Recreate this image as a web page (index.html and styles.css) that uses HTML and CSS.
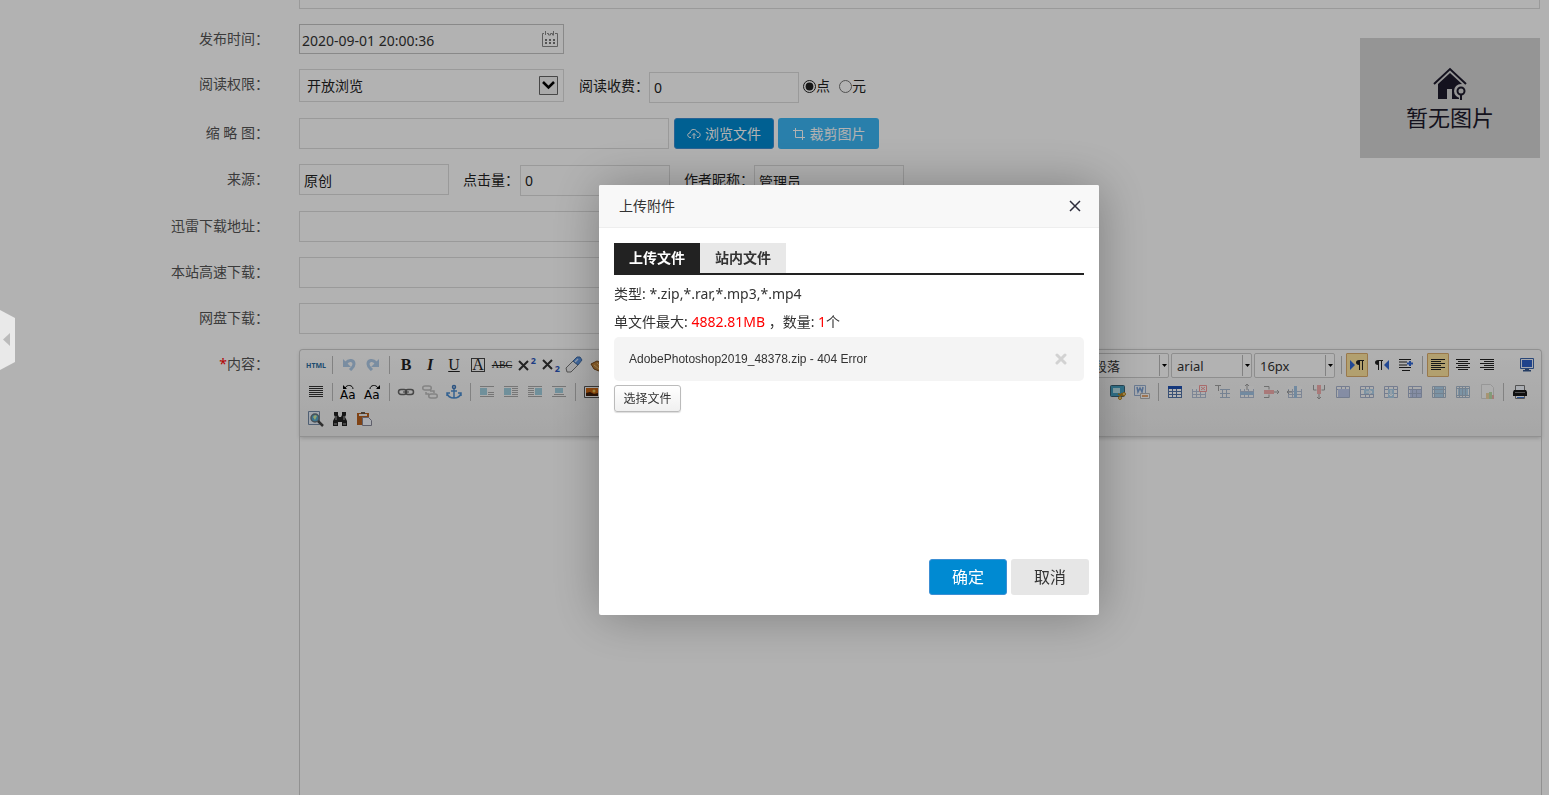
FILE: index.html
```html
<!DOCTYPE html>
<html lang="zh-CN">
<head>
<meta charset="utf-8">
<title>上传附件</title>
<link rel="stylesheet" href="styles.css">
</head>
<body>
<svg class="defs" aria-hidden="true">
  <symbol id="grid" viewBox="0 0 16 16"><path fill="#fff" d="M1 2h14v12H1z"/><path d="M1.500 5v9M5.500 5v9M9.500 5v9M14.500 5v9M1 7.500h14M1 10.500h14M1 13.500h14" fill="none" stroke="#5474a8"/></symbol>
  <symbol id="lines" viewBox="0 0 16 16"><path d="M1 2.500h14M1 4.500h14M1 6.500h14M1 8.500h14M1 10.500h14M1 12.500h14" fill="none" stroke="#333"/></symbol>
  <symbol id="undo" viewBox="0 0 16 16"><path d="M5 6c3-4 8-3 8 1 0 3-2 4-4 6" fill="none" stroke="#8fb6df" stroke-width="3"/><path fill="#8fb6df" d="M2 2v8h8z"/></symbol>
</svg>
<main class="page">
  <textarea class="summary" aria-label="简介"></textarea>
  <div class="top">
    <div class="rows">
      <div class="row">
        <label class="label" for="time">发布时间：</label>
        <div class="date">
          <input id="time" value="2020-09-01 20:00:36">
          <svg class="calendar" viewBox="0 0 18 18"><path d="M3 3.500H1.500v13h15v-13H14M6 3.500h1.500V5H9.500V3.500h2V5H13M4.500 1v4M12.500 1v4" fill="none" stroke="#888"/><path d="M4 9h2v2H4zM8 9h2v2H8zM12 9h2v2h-2zM4 12h2v2H4zM8 12h2v2H8zM12 12h2v2h-2z" fill="#777"/></svg>
        </div>
      </div>
      <div class="row row-tall">
        <label class="label" for="access">阅读权限：</label>
        <div class="access">
          <select id="access"><option>开放浏览</option></select>
          <svg class="drop" viewBox="0 0 19 19"><path d="M.5.500h18v18H.5z" fill="#f2f2f2" stroke="#666"/><path d="M4 6l5.500 5.500L15 6" fill="none" stroke="#000" stroke-width="2.500"/></svg>
        </div>
        <label class="side side-mid" for="fee">阅读收费：</label>
        <input class="field short low" id="fee" value="0">
        <label class="radio"><input type="radio" name="unit" checked>点</label>
        <label class="radio"><input type="radio" name="unit">元</label>
      </div>
      <div class="row">
        <label class="label" for="thumb">缩 略 图：</label>
        <input class="field" id="thumb">
        <button class="btn blue"><svg viewBox="0 0 14 14"><path d="M4 10.500H3C0 10 0 6 3 6c0-4 6-5 7-1 4 0 4 5 1 5.500h-1M7 12V6.500M5 8.500l2-2 2 2" fill="none" stroke="currentColor"/></svg>浏览文件</button>
        <button class="btn sky"><svg viewBox="0 0 14 14"><path d="M3.500 1v9.500H13M1 3.500h9.500V13" fill="none" stroke="currentColor"/></svg>裁剪图片</button>
      </div>
      <div class="row">
        <label class="label" for="source">来源：</label>
        <input class="field short" id="source" value="原创">
        <label class="side" for="hits">点击量：</label>
        <input class="field short dip" id="hits" value="0">
        <label class="side" for="author">作者昵称：</label>
        <input class="field short dip" id="author" value="管理员">
      </div>
    </div>
    <div class="picture">
      <svg viewBox="0 0 34 34"><path d="M1 17L17 2l16 15" fill="none" stroke="#1d1a2c" stroke-width="2"/><path d="M5 17L17 6l12 11v15H19V22h-5v10H5z" fill="#1d1a2c"/><circle cx="28" cy="24" r="7" fill="#d6d6d6"/><path d="M26 24h4v9h-4z" fill="#d6d6d6"/><circle cx="28" cy="24" r="3.500" fill="none" stroke="#1d1a2c" stroke-width="2"/><path d="M28 27v6" stroke="#1d1a2c" stroke-width="2"/></svg>
      <span>暂无图片</span>
    </div>
  </div>
  <div class="row"><label class="label" for="d1">迅雷下载地址：</label><input class="field long" id="d1"></div>
  <div class="row"><label class="label" for="d2">本站高速下载：</label><input class="field long" id="d2"></div>
  <div class="row"><label class="label" for="d3">网盘下载：</label><input class="field long" id="d3"></div>
  <div class="row editor-row">
    <span class="label"><b class="star">*</b>内容：</span>
    <div class="editor">
      <div class="toolbar">
        <div class="tools">
          <div class="group">
            <button class="tool html">HTML</button><i class="sep"></i>
            <button class="tool pale" title="撤销"><svg><use href="#undo"/></svg></button>
            <button class="tool pale flip" title="重做"><svg><use href="#undo"/></svg></button><i class="sep"></i>
            <button class="tool serif bold">B</button>
            <button class="tool serif italic">I</button>
            <button class="tool serif under">U</button>
            <button class="tool serif"><span class="boxed">A</span></button>
            <button class="tool serif strike">ABC</button>
            <button class="tool script"><svg viewBox="0 0 16 16"><path d="M1 4l9 9M10 4l-9 9" stroke="#333" stroke-width="2"/></svg><sup>2</sup></button>
            <button class="tool script"><svg viewBox="0 0 16 16"><path d="M1 3l9 9M10 3l-9 9" stroke="#333" stroke-width="2"/></svg><sub>2</sub></button>
            <button class="tool" title="清除格式"><svg viewBox="0 0 16 16"><path d="M0 11l7-7 5 4-7 7H1z" fill="#f2f2f4" stroke="#777"/><path d="M7 4l4-4h3l2 3-4 5z" fill="#5b93e0" stroke="#4470a8"/><path d="M9 5l3-3" stroke="#cfe2fb" stroke-width="1.500"/></svg></button>
            <button class="tool" title="格式刷"><svg viewBox="0 0 16 16"><path d="M1 7l6-3 7 3-5 7-5-2z" fill="#cc8a3c" stroke="#7b4a18"/><path d="M4 8l5 4M7 6l4 4" stroke="#f0c37c"/></svg></button>
          </div>
          <div class="group">
            <div class="combo"><select aria-label="段落"><option>段落</option></select><svg viewBox="0 0 10 25"><path d="M.5 2v21" stroke="#bbb"/><path d="M3 11h5l-2.500 3z"/></svg></div>
            <div class="combo"><select aria-label="字体"><option>arial</option></select><svg viewBox="0 0 10 25"><path d="M.5 2v21" stroke="#bbb"/><path d="M3 11h5l-2.500 3z"/></svg></div>
            <div class="combo"><select aria-label="字号"><option>16px</option></select><svg viewBox="0 0 10 25"><path d="M.5 2v21" stroke="#bbb"/><path d="M3 11h5l-2.500 3z"/></svg></div>
            <i class="sep"></i>
            <button class="tool on" title="从左向右"><svg viewBox="0 0 16 16"><path d="M1 3v10l5-5z" fill="#3168d4"/><path d="M10 8C6 8 6 3 10 3h5v1h-1v9h-1V4h-2v9h-1z" fill="#222"/></svg></button>
            <button class="tool" title="从右向左"><svg viewBox="0 0 16 16"><path d="M15 3v10l-5-5z" fill="#3168d4"/><path d="M4 8C0 8 0 3 4 3h5v1H8v9H7V4H5v9H4z" fill="#222"/></svg></button>
            <button class="tool" title="首行缩进"><svg viewBox="0 0 16 16"><path d="M1 2.500h12M1 5h8M1 8h8M1 10.500h12M4 13.500h8" fill="none" stroke="#222"/><path d="M9 6.500h6M12 4v5" stroke="#3168d4" stroke-width="2"/></svg></button>
            <i class="sep"></i>
            <button class="tool on" title="居左"><svg viewBox="0 0 16 16"><path d="M1 2.500h14M1 4.500h10M1 6.500h14M1 8.500h10M1 10.500h14M1 12.500h10" stroke="#222"/></svg></button>
            <button class="tool" title="居中"><svg viewBox="0 0 16 16"><path d="M1 2.500h14M3 4.500h10M1 6.500h14M3 8.500h10M1 10.500h14M3 12.500h10" stroke="#222"/></svg></button>
            <button class="tool" title="居右"><svg viewBox="0 0 16 16"><path d="M1 2.500h14M5 4.500h10M1 6.500h14M5 8.500h10M1 10.500h14M5 12.500h10" stroke="#222"/></svg></button>
            <button class="tool full" title="全屏"><svg viewBox="0 0 16 16"><path d="M1.500 1.500h13v10h-13z" fill="#eef3fc" stroke="#3d66ad"/><path d="M3 3h10v7H3z" fill="#2e60c8"/><path d="M6 12h4v1h2v1.500H4V13h2z" fill="#35588f"/></svg></button>
          </div>
        </div>
        <div class="tools">
          <div class="group">
            <button class="tool" title="两端对齐"><svg><use href="#lines"/></svg></button><i class="sep"></i>
            <button class="tool" title="字母大写"><svg viewBox="0 0 16 16"><text x="-1" y="15" class="case">Aa</text><path d="M4 4c2-4 8-3 8 1" fill="none" stroke="#111"/><path d="M2 1v4h4z"/></svg></button>
            <button class="tool" title="字母小写"><svg viewBox="0 0 16 16"><text x="-1" y="15" class="case">Aa</text><path d="M5 5c0-4 6-5 8-1" fill="none" stroke="#111"/><path d="M15 1v4h-4z"/></svg></button><i class="sep"></i>
            <button class="tool" title="超链接"><svg viewBox="0 0 16 16"><rect x=".500" y="5.500" width="8" height="5" rx="2.500" fill="none" stroke="#666" stroke-width="1.500"/><rect x="7.500" y="5.500" width="8" height="5" rx="2.500" fill="none" stroke="#666" stroke-width="1.500"/><path d="M5 8h6" stroke="#555"/></svg></button>
            <button class="tool dim" title="取消链接"><svg viewBox="0 0 16 16"><path d="M7 6H3C0 6 0 2 3 2h4c3 0 3 4 0 4M9 14h4c3 0 3-4 0-4H9c-3 0-3 4 0 4M4 8v2h3M8 7h4v2" fill="none" stroke="#666" stroke-width="1.500"/></svg></button>
            <button class="tool" title="锚点"><svg viewBox="0 0 16 16"><circle cx="8" cy="3" r="1.500" fill="none" stroke="#3f78b8" stroke-width="1.500"/><path d="M8 5v9M5 7h6M1 9c1 4 4 5 7 5s6-1 7-5M1 12V9h3M12 9h3v3" fill="none" stroke="#4d8ed1" stroke-width="1.500"/></svg></button><i class="sep"></i>
            <button class="tool half" title="默认"><svg viewBox="0 0 16 16"><path d="M1 2.500h14M9 8.500h6M9 10.500h6M1 12.500h14" stroke="#777"/><path d="M1 4h7v7H1z" fill="#69b6d0"/></svg></button>
            <button class="tool half" title="左浮动"><svg viewBox="0 0 16 16"><path d="M1 2.500h14M9 4.500h6M9 6.500h6M9 8.500h6M9 10.500h6M1 12.500h14" stroke="#777"/><path d="M1 4h7v7H1z" fill="#69b6d0"/></svg></button>
            <button class="tool half" title="右浮动"><svg viewBox="0 0 16 16"><path d="M1 2.500h14M1 4.500h6M1 6.500h6M1 8.500h6M1 10.500h6M1 12.500h14" stroke="#777"/><path d="M8 4h7v7H8z" fill="#69b6d0"/></svg></button>
            <button class="tool half" title="居中图片"><svg viewBox="0 0 16 16"><path d="M1 2.500h14M3 10.500h10M1 12.500h14" stroke="#777"/><path d="M4 4h8v5H4z" fill="#69b6d0"/></svg></button><i class="sep"></i>
            <button class="tool" title="图片"><svg viewBox="0 0 16 16"><path d="M.5 2.500h15v11H.5z" fill="#fff" stroke="#555"/><path d="M2 4h12v8H2z" fill="#d46a12"/><path d="M2 9l4-1 4 2 4-1v3H2z" fill="#42200d"/><circle cx="10" cy="7" r="1.500" fill="#ffd35c"/></svg></button>
          </div>
          <div class="group second">
            <button class="tool" title="截图"><svg viewBox="0 0 16 16"><rect x=".500" y="1.500" width="14" height="11" rx="1" fill="#45a2c4" stroke="#3b6378"/><path d="M3 4h7v5H3z" fill="#bde6ef"/><path d="M8 10l6 2M12 9l-2 4" stroke="#ba851f" stroke-width="1.500"/><circle cx="14" cy="10" r="1.500" fill="#ffe08a" stroke="#ba851f"/><circle cx="10" cy="14" r="1.500" fill="#ffe08a" stroke="#ba851f"/></svg></button>
            <button class="tool half" title="图片转存"><svg viewBox="0 0 16 16"><path d="M.5 1.500h11v10H.5z" fill="#edf4ff" stroke="#5a81b8"/><path d="M3 3l1 5 2-4 2 4 1-5" fill="none" stroke="#2867bb" stroke-width="1.500"/><path d="M6.500 9.500h9v5h-9z" fill="#fff" stroke="#888"/><path d="M8 11h6v2H8z" fill="#da7420"/></svg></button><i class="sep"></i>
            <button class="tool" title="插入表格"><svg viewBox="0 0 16 16"><use href="#grid"/><path d="M1 2h14v3H1z" fill="#1f51b2"/></svg></button>
            <button class="tool dim" title="删除表格"><svg viewBox="0 0 16 16"><use href="#grid"/><path d="M8.500 1.500h7v6h-7z" fill="#fff" stroke="#e11"/><path d="M10 3l4 3M14 3l-4 3" stroke="#e11"/></svg></button>
            <button class="tool dim" title="表前插行"><svg viewBox="0 0 16 16"><path d="M0 1.500h6M3.500 1v6" stroke="#222"/><path d="M5 5.500h10M5 9.500h10M5 13.500h10M7.500 5v9M11.500 5v9" fill="none" stroke="#36639b"/></svg></button>
            <button class="tool dim" title="插入行"><svg viewBox="0 0 16 16"><use href="#grid"/><path d="M1 8h14v3H1z" fill="#2b7fd0"/><path d="M8 6V0M6 2l2-2 2 2" fill="none" stroke="#222"/></svg></button>
            <button class="tool dim" title="删除行"><svg viewBox="0 0 16 16"><path d="M1 2.500h5v3M1 13.500h5v-3M11 8h5M14 6l2 2-2 2" fill="none" stroke="#222"/><path d="M1 6h10v4H1z" fill="#e44"/></svg></button>
            <button class="tool dim" title="插入列"><svg viewBox="0 0 16 16"><use href="#grid"/><path d="M7 2h3v12H7z" fill="#2b7fd0"/><path d="M5 8H0M2 6L0 8l2 2" fill="none" stroke="#222"/></svg></button>
            <button class="tool dim" title="删除列"><svg viewBox="0 0 16 16"><path d="M2.500 1v5h3M13.500 1v5h-3M8 10v5M6 13l2 2 2-2" fill="none" stroke="#222"/><path d="M6 1h4v9H6z" fill="#e44"/></svg></button>
            <button class="tool dim" title="合并单元格"><svg viewBox="0 0 16 16"><path d="M1.500 2.500h13v11h-13zM1 5.500h14M6.500 2v3M10.500 2v3" fill="#fff" stroke="#345292"/><path d="M3 5h11v8H3z" fill="#6e8ddd"/></svg></button>
            <button class="tool dim" title="右合并"><svg viewBox="0 0 16 16"><path d="M1.500 2.500h13v11h-13zM1 5.500h14M1 10.500h14M6.500 2v11M10.500 2v11" fill="#fff" stroke="#345292"/><path d="M5 5h10v5H5z" fill="#4aa0dc"/><path d="M7 8h6M10 6l3 2-3 2" stroke="#fff" fill="none"/></svg></button>
            <button class="tool dim" title="下合并"><svg viewBox="0 0 16 16"><path d="M1.500 2.500h13v11h-13zM1 5.500h14M1 9.500h14M5.500 2v11M10.500 2v11" fill="#fff" stroke="#345292"/><path d="M5 5h6v9H5z" fill="#4aa0dc"/><path d="M8 6v6M6 10l2 2 2-2" stroke="#fff" fill="none"/></svg></button>
            <button class="tool dim" title="拆分单元格"><svg viewBox="0 0 16 16"><path d="M3 5h11v8H3z" fill="#6e8ddd"/><path d="M1.500 2.500h13v11h-13zM1 5.500h14M1 9.500h14M5.500 2v11M9.500 5v9" fill="none" stroke="#345292"/></svg></button>
            <button class="tool dim" title="拆分行"><svg viewBox="0 0 16 16"><path d="M4 3h8v11H4z" fill="#4aa0dc"/><path d="M1.500 2.500h13v11h-13zM1 5.500h14M1 9.500h14M3.500 3v11M12.500 3v11" fill="none" stroke="#346292"/></svg></button>
            <button class="tool dim" title="拆分列"><svg viewBox="0 0 16 16"><path d="M3 5h10v7H3z" fill="#4aa0dc"/><path d="M1.500 2.500h13v11h-13zM1 4.500h14M1 11.500h14M4.500 3v11M7.500 3v11M10.500 3v11" fill="none" stroke="#346292"/></svg></button>
            <button class="tool dim" title="图表"><svg viewBox="0 0 16 16"><path d="M2.500.500h9l3 3v11h-12z" fill="#fff" stroke="#aaa"/><path d="M7 9h3v6H7z" fill="#e9a72f"/><path d="M10 8h3v7h-3z" fill="#6b4"/><path d="M13 11h2v4h-2z" fill="#d54"/></svg></button><i class="sep"></i>
            <button class="tool" title="打印"><svg viewBox="0 0 16 16"><path d="M3.500 1.500h9v5h-9zM3.500 10.500h9v4h-9z" fill="#f4f8ff" stroke="#777"/><path d="M2 6h12l1 2v4H1V8z" fill="#171717"/><path d="M3 8.500h10" stroke="#777"/><path d="M5 13h7v1H5z" fill="#3c76d5"/></svg></button>
          </div>
        </div>
        <div class="tools">
          <div class="group">
            <button class="tool" title="预览"><svg viewBox="0 0 16 16"><path d="M.5.500h11v13H.5z" fill="#e8f0fa" stroke="#7289a5"/><circle cx="7" cy="7" r="4" fill="#54a8cf" stroke="#68737b" stroke-width="1.500"/><path d="M5 6l2-2 2 1-2 4z" fill="#d7ec9f"/><path d="M10 10l5 5" stroke="#444" stroke-width="2.500"/></svg></button>
            <button class="tool" title="查询替换"><svg viewBox="0 0 16 16"><path d="M2 1h4v3l1 2h2l1-2V1h4v3l-1 2 2 4v5h-5v-4H6v4H1v-5l2-4-1-2z" fill="#222"/><path d="M2 13h3M11 13h3M4 5v4M12 5v4" stroke="#aaa"/></svg></button>
            <button class="tool" title="粘贴"><svg viewBox="0 0 16 16"><path d="M1 2h12v12H1z" fill="#b8601f"/><path d="M3 3h8v2H3z" fill="#eee"/><path d="M5 1h4v2H5z" fill="#654"/><path d="M6.500 6.500h6l3 3v5h-9z" fill="#f5f8ff" stroke="#889"/></svg></button>
          </div>
        </div>
      </div>
      <div class="canvas" contenteditable="true" role="textbox" aria-label="内容"></div>
    </div>
  </div>
</main>
<div class="shade"></div>
<button class="collapse" aria-label="收起侧栏"><svg viewBox="0 0 15 60"><path d="M0 0l15 8v44L0 60z" fill="#e9e9e9"/><path d="M3 29.500L10 23v13z" fill="#bbb"/></svg></button>
<section class="dialog" role="dialog" aria-labelledby="dialog-title">
  <header class="dialog-head">
    <span id="dialog-title">上传附件</span>
    <button class="close" aria-label="关闭"><svg viewBox="0 0 12 12"><path d="M1 1l10 10M11 1L1 11" stroke="#2e2d3c" stroke-width="1.500"/></svg></button>
  </header>
  <div class="dialog-body">
    <div class="tabs"><button class="tab active">上传文件</button><button class="tab">站内文件</button></div>
    <p>类型: *.zip,*.rar,*.mp3,*.mp4</p>
    <p>单文件最大: <em>4882.81MB</em> ，数量: <em>1</em>个</p>
    <div class="file"><span>AdobePhotoshop2019_48378.zip - 404 Error</span><button class="remove" aria-label="移除"><svg viewBox="0 0 12 12"><path d="M2 2l8 8M10 2l-8 8" stroke="#d2d2d2" stroke-width="3" stroke-linecap="round"/></svg></button></div>
    <button class="choose">选择文件</button>
  </div>
  <footer class="dialog-foot"><button class="ok">确定</button><button class="cancel">取消</button></footer>
</section>
</body>
</html>
```
FILE: styles.css
```css
* { box-sizing: border-box; }
html, body { height: 100%; }
body { margin: 0; overflow: hidden; background: #fff; color: #333; font: 14px/20px "Noto Sans", "Noto Sans CJK SC", sans-serif; }
button, input, select, textarea { margin: 0; font: inherit; color: inherit; }
button { padding: 0; border: 0; background: none; }
svg { display: block; flex: none; }
p { margin: 0; line-height: 28px; }
em { font-style: normal; color: #f00; }
.defs { position: absolute; width: 0; height: 0; }

.page { display: flex; flex-direction: column; gap: 15px; min-height: 100%; padding-right: 7px; }
.summary { height: 9px; margin: 0 2px 0 299px; border: 1px solid #ddd; border-top: 0; resize: none; background: none; overflow: hidden; }
.top { display: flex; justify-content: space-between; }
.rows { display: flex; flex-direction: column; gap: 15px; }
.row { display: flex; align-items: flex-start; }
.row-tall { height: 34px; }
.label { flex: none; width: 269px; margin-right: 30px; text-align: right; line-height: 29px; color: #555; white-space: pre; }
.star { color: #f00; font-weight: normal; }
.field { width: 370px; height: 31px; padding: 0 4px; border: 1px solid #ddd; background: #fff; color: #222; }
.short { width: 150px; }
.long { width: 600px; }
.low { margin-top: 3px; }
.dip { margin-top: 1px; }
.date, .access { position: relative; width: 265px; }
.date input { display: block; width: 100%; height: 30px; padding: 2px 2px 0; border: 1px solid #c4c4c4; background: none; }
.calendar { position: absolute; right: 5px; top: 6px; width: 18px; height: 18px; }
.access select { display: block; appearance: none; width: 100%; height: 33px; padding: 1px 7px 0; border: 1px solid #ddd; border-radius: 0; background: #fff; color: #222; }
.drop { position: absolute; right: 6px; top: 7px; width: 19px; height: 19px; pointer-events: none; }
.side { width: 71px; padding-left: 14px; line-height: 32px; color: #222; white-space: nowrap; }
.row-tall .side { width: 85px; padding-left: 15px; line-height: 34px; }
.side[for="author"] { width: 84px; }
.radio { display: flex; align-items: center; height: 34px; margin-left: 4px; color: #222; }
.radio + .radio { margin-left: 9px; }
.radio input { width: 13px; height: 13px; accent-color: #222; }
.btn { display: flex; align-items: center; justify-content: center; gap: 4px; width: 100px; height: 31px; margin-left: 5px; border-radius: 3px; color: #fff; }
.btn svg { width: 14px; height: 14px; }
.blue { border: 1px solid #3c8fd4; background: #008ad2; }
.sky { width: 101px; margin-left: 4px; background: #3cb7f5; }
.picture { display: flex; flex-direction: column; align-items: center; width: 180px; height: 120px; margin: 14px 2px 0 0; padding-top: 29px; background: #d6d6d6; color: #1d1a2c; font-size: 22px; line-height: 32px; }
.picture svg { width: 34px; height: 34px; }

.editor-row { flex: 1; align-items: stretch; }
.editor { flex: 1; display: flex; flex-direction: column; border: 1px solid #d0d0d0; border-bottom: 0; border-radius: 4px 4px 0 0; }
.toolbar { height: 87px; padding: 3px 2px 0 4px; border-bottom: 1px solid #d0d0d0; border-radius: 4px 4px 0 0; background: linear-gradient(#fdfdfd, #efefef); box-shadow: 0 1px 4px #ccc; }
.tools { display: flex; justify-content: space-between; height: 27px; }
.group { display: flex; }
.second { padding-right: 7px; }
.tool { display: flex; align-items: center; justify-content: center; width: 24px; height: 24px; color: #222; line-height: 20px; }
.tool svg { width: 16px; height: 16px; overflow: visible; }
.sep { width: 1px; height: 18px; margin: 3px 4px; background: #bbb; }
.dim svg { opacity: .4; }
.half svg { opacity: .6; }
.pale svg { opacity: .7; }
.flip svg { transform: scaleX(-1); }
.on { width: 22px; margin-right: 2px; border: 1px solid #dcac6c; border-radius: 1px; background: #ffe69f; }
.full { margin-left: 16px; }
.html { font: bold 7px "Noto Sans", sans-serif; color: #2b6c9f; }
.serif { font-family: "Liberation Serif", serif; font-size: 16px; }
.bold { font-weight: bold; }
.italic { font-style: italic; font-weight: bold; }
.under { text-decoration: underline; }
.boxed { width: 14px; height: 14px; border: 1px solid #444; line-height: 12px; }
.strike { font-size: 10px; text-decoration: line-through; }
.script { position: relative; }
.script sup, .script sub { position: absolute; right: 2px; color: #2c56bd; font-size: 9px; font-weight: bold; line-height: 8px; }
.script sup { top: 4px; }
.script sub { bottom: 4px; }
.case { font: 12px "DejaVu Sans", sans-serif; }
.combo { position: relative; width: 81px; margin-right: 2px; }
.combo select { appearance: none; width: 100%; height: 25px; padding: 0 5px; border: 1px solid #ccc; border-radius: 2px; background: #fff; font-size: 13px; }
.combo svg { position: absolute; right: 0; top: 0; width: 10px; height: 25px; pointer-events: none; }
.canvas { flex: 1; }

.shade { position: fixed; inset: 0; background: rgba(0, 0, 0, .3); }
.collapse { position: fixed; left: 0; top: 310px; width: 15px; height: 60px; }
.collapse svg { width: 15px; height: 60px; }

.dialog { position: fixed; left: 599px; top: 185px; display: flex; flex-direction: column; width: 500px; height: 430px; border-radius: 2px; background: #fff; box-shadow: 1px 1px 50px rgba(0, 0, 0, .3); }
.dialog-head { display: flex; align-items: center; justify-content: space-between; height: 43px; padding: 0 18px 0 20px; border-bottom: 1px solid #eee; border-radius: 2px 2px 0 0; background: #f8f8f8; }
.close svg { width: 12px; height: 12px; }
.dialog-body { flex: 1; padding: 15px; }
.tabs { display: flex; margin-bottom: 5px; border-bottom: 2px solid #222; }
.tab { height: 30px; padding: 0 15px; background: #e8e8e8; font-weight: bold; }
.active { background: #222; color: #fff; }
.file { display: flex; align-items: center; justify-content: space-between; height: 44px; margin: 1px 0 4px; padding: 0 17px 0 15px; border-radius: 5px; background: #f4f4f4; font: 12px/20px "Liberation Sans", sans-serif; }
.remove svg { width: 12px; height: 12px; }
.choose { width: 67px; height: 27px; border: 1px solid #bbb; border-radius: 3px; background: linear-gradient(#fff, #f0f0f0); box-shadow: 0 1px 1px #ddd; font-size: 12px; }
.dialog-foot { display: flex; justify-content: flex-end; gap: 4px; padding: 0 10px 20px; }
.dialog-foot button { width: 78px; height: 36px; border-radius: 3px; font-size: 16px; }
.ok { border: 1px solid #3c8fd4; background: #008ad2; color: #fff; }
.cancel { background: #e6e6e6; }
```
